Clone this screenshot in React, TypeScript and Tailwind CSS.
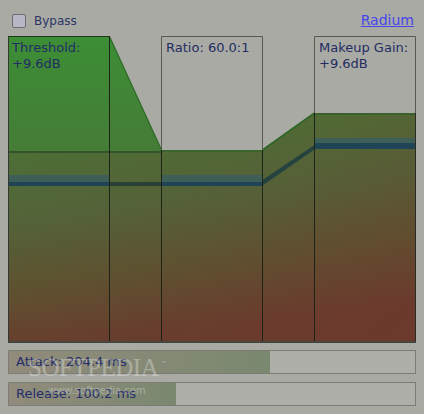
import React from "react";

interface BarProps {
  label: string;
  fill: number;
}

const Bar: React.FC<BarProps> = ({ label, fill }) => {
  return (
    <div className="relative flex h-[24px] w-[408px] items-center border border-[#7b7c76] bg-[#aeafa9]">
      <div
        className="absolute top-0 bottom-0 left-0 bg-gradient-to-r from-[#918b7c] to-[#7a8870]"
        style={{ width: fill }}
      />
      <span className="relative pl-[7px] text-[13px] text-[#252d68]">{label}</span>
    </div>
  );
};

const Graph: React.FC = () => {
  return (
    <div className="relative ml-[8px] h-[307px] w-[408px]">
      <svg className="absolute inset-0" width="408" height="307" viewBox="0 0 408 307">
        <defs>
          <linearGradient id="base" x1="0" y1="0" x2="0.15" y2="1">
            <stop offset="0" stopColor="#4a7c36" />
            <stop offset="0.35" stopColor="#4c7035" />
            <stop offset="0.6" stopColor="#53643a" />
            <stop offset="0.8" stopColor="#5c5431" />
            <stop offset="1" stopColor="#673f2e" />
          </linearGradient>
          <linearGradient id="redden" x1="0" y1="0.3" x2="1" y2="1">
            <stop offset="0" stopColor="#7a2a28" stopOpacity="0" />
            <stop offset="0.5" stopColor="#7a2a28" stopOpacity="0.08" />
            <stop offset="1" stopColor="#7a2a28" stopOpacity="0.28" />
          </linearGradient>
          <linearGradient id="over" x1="0" y1="0" x2="0" y2="115" gradientUnits="userSpaceOnUse">
            <stop offset="0" stopColor="#3c8e35" />
            <stop offset="1" stopColor="#457c37" />
          </linearGradient>
        </defs>

        {/* level fill */}
        <polygon points="1,1 101.5,1 153.5,114 254.5,114 306.5,77 407,77 407,306 1,306" fill="url(#base)" />
        <polygon points="1,1 101.5,1 153.5,114 254.5,114 306.5,77 407,77 407,306 1,306" fill="url(#redden)" />
        <polygon points="1,1 101.5,1 153.5,114 153.5,116 1,116" fill="url(#over)" />

        {/* edges */}
        <line x1="101.5" y1="0.5" x2="153.5" y2="114" stroke="#2e6c27" strokeWidth="1.3" />
        <line x1="254.5" y1="114" x2="306.5" y2="77" stroke="#2c6626" strokeWidth="1.6" />
        <rect x="153.5" y="114" width="101" height="2" fill="#3a652d" />
        <rect x="306.5" y="77" width="101" height="2" fill="#3a602d" />
        <rect x="1" y="115" width="152.5" height="2" fill="#33532b" />

        {/* output level */}
        <rect x="1" y="139" width="100.5" height="7" fill="#3d5f57" />
        <rect x="1" y="146" width="100.5" height="4" fill="#1f4455" />
        <rect x="101.5" y="146" width="52" height="4" fill="#2a4036" />
        <rect x="153.5" y="139" width="101" height="7" fill="#3d5f57" />
        <rect x="153.5" y="146" width="101" height="4" fill="#1f4455" />
        <polygon points="254.5,144 306.5,109 306.5,113.5 254.5,149.5" fill="#24433f" />
        <rect x="306.5" y="102" width="101" height="5" fill="#3d5f57" />
        <rect x="306.5" y="107" width="101" height="6" fill="#1f4455" />

        {/* boxes above fill */}
        <path d="M153.5 114 V0.5 H254.5 V114" fill="none" stroke="#585a51" />
        <path d="M306.5 77 V0.5 H407.5 V77" fill="none" stroke="#585a51" />

        {/* column borders */}
        <line x1="0.5" y1="0" x2="0.5" y2="306" stroke="#343830" />
        <line x1="0" y1="0.5" x2="101.5" y2="0.5" stroke="#1f3a1b" />
        <line x1="101.5" y1="0" x2="101.5" y2="306" stroke="#1d2317" />
        <line x1="153.5" y1="114" x2="153.5" y2="306" stroke="#1d2317" />
        <line x1="254.5" y1="114" x2="254.5" y2="306" stroke="#1d2317" />
        <line x1="306.5" y1="77" x2="306.5" y2="306" stroke="#1d2317" />
        <line x1="407.5" y1="77" x2="407.5" y2="306" stroke="#2a2b22" />
        <rect x="0" y="305" width="408" height="2" fill="#43453e" />
      </svg>

      <div className="relative flex text-[13px] leading-[16px] text-[#232c63]">
        <div className="w-[101px] pt-[4px] pl-[4px]">
          <div>Threshold:</div>
          <div>+9.6dB</div>
        </div>
        <div className="w-[52px]" />
        <div className="w-[101px] pt-[4px] pl-[5px]">
          <div>Ratio: 60.0:1</div>
        </div>
        <div className="w-[52px]" />
        <div className="w-[101px] pt-[4px] pl-[5px]">
          <div>Makeup Gain:</div>
          <div>+9.6dB</div>
        </div>
      </div>
    </div>
  );
};

export default function App() {
  return (
    <div className="relative h-[414px] w-[424px] overflow-hidden bg-[#a9aaa3] font-['DejaVu_Sans',sans-serif]">
      <div className="flex h-[36px] items-center justify-between pt-[5px] pr-[10px] pl-[12px]">
        <label className="flex items-center gap-[8px]">
          <span className="block h-[14px] w-[14px] rounded-[2px] border border-[#6b6b73] bg-[#b7b7c8]" />
          <span className="text-[12px] text-[#2c3566]">Bypass</span>
        </label>
        <a className="text-[14px] text-[#4646ec] underline">Radium</a>
      </div>

      <Graph />

      <div className="mt-[7px] flex flex-col gap-[8px] pl-[8px]">
        <Bar label="Attack: 204.4 ms" fill={261} />
        <Bar label="Release: 100.2 ms" fill={167} />
      </div>

      {/* watermark */}
      <div className="pointer-events-none absolute top-[349px] left-[28px] font-['Liberation_Serif',serif] text-[25px] tracking-[-0.5px] text-white opacity-30">
        SOFTPEDIA
        <span className="relative -top-[10px] ml-[2px] font-['DejaVu_Sans',sans-serif] text-[7px]">™</span>
      </div>
      <div className="pointer-events-none absolute top-[383px] left-[48px] font-['DejaVu_Sans',sans-serif] text-[10px] text-white opacity-30">
        www.softpedia.com
      </div>
    </div>
  );
}
